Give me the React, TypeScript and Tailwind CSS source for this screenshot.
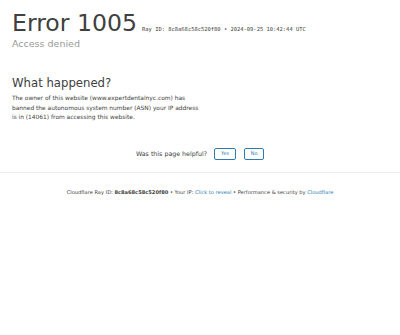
export default function App() {
  return (
    <div className="min-h-[335px] w-[400px] bg-white font-['DejaVu_Sans',sans-serif] text-[#404040]">
      {/* Header */}
      <div className="px-3 pt-[9px]">
        <div className="flex items-baseline">
          <h1 className="text-[23.6px] leading-[28px] text-[#404040]">Error 1005</h1>
          <span className="ml-[5px] font-['DejaVu_Sans_Mono',monospace] text-[5.45px] text-[#404040]">
            Ray ID: 8c8a68c58c520f80 &bull; 2024-09-25 10:42:44 UTC
          </span>
        </div>
        <h2 className="text-[9.5px] leading-[14px] text-[#999]">Access denied</h2>
      </div>

      {/* What happened */}
      <div className="px-3 pt-[25px]">
        <h2 className="text-[11.7px] leading-[14px] text-[#404040]">What happened?</h2>
        <p className="mt-[4px] w-[192px] text-[5.9px] leading-[9.5px] text-[#404040]">
          The owner of this website (www.expertdentalnyc.com) has banned the autonomous system number (ASN) your IP address is in (14061) from accessing this website.
        </p>
      </div>

      {/* Feedback */}
      <div className="mt-[25px] flex items-center justify-center text-[6.3px]">
        <span className="mr-[7px]">Was this page helpful?</span>
        <button className="h-[12px] w-[22px] rounded-[2px] border border-[#2c7cb0] text-[5px] text-[#2c7cb0]">Yes</button>
        <button className="ml-[8px] h-[12px] w-[20px] rounded-[2px] border border-[#2c7cb0] text-[5px] text-[#2c7cb0]">No</button>
      </div>

      <div className="mt-[12px] border-t border-[#ededed]" />

      {/* Footer */}
      <div className="mt-[16px] text-center text-[5.12px] text-[#404040]">
        Cloudflare Ray ID: <strong className="font-bold">8c8a68c58c520f80</strong> &bull; Your IP:{" "}
        <span className="text-[#2c7cb0]">Click to reveal</span> &bull; Performance &amp; security by{" "}
        <span className="text-[#2c7cb0]">Cloudflare</span>
      </div>
    </div>
  );
}
